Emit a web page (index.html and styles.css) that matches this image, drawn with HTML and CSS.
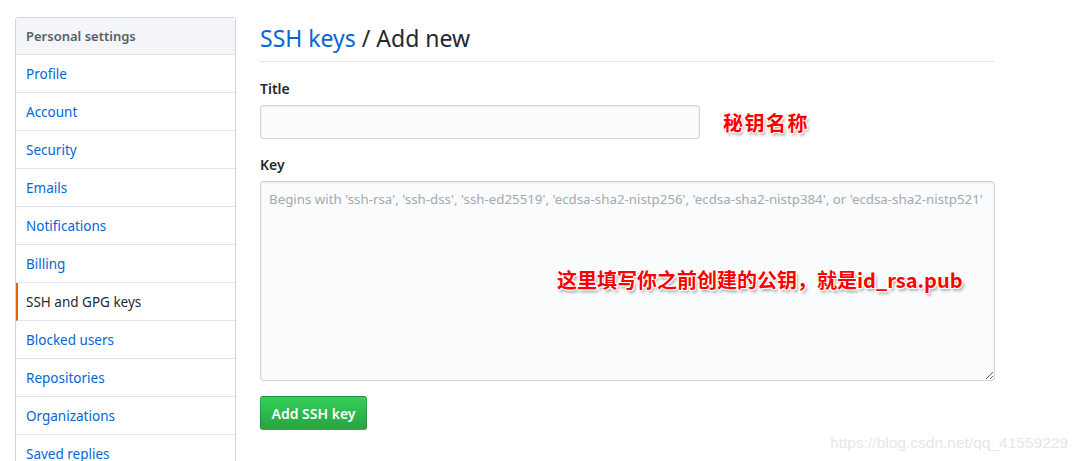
FILE: index.html
```html
<!DOCTYPE html>
<html lang="zh-CN">
<head>
  <meta charset="UTF-8">
  <title>SSH keys / Add new</title>
  <link rel="stylesheet" href="styles.css">
</head>
<body>
  <div class="pagina">
    <nav class="menu">
      <div class="menu-titulo">Personal settings</div>
      <a class="menu-item" href="#">Profile</a>
      <a class="menu-item" href="#">Account</a>
      <a class="menu-item" href="#">Security</a>
      <a class="menu-item" href="#">Emails</a>
      <a class="menu-item" href="#">Notifications</a>
      <a class="menu-item" href="#">Billing</a>
      <a class="menu-item activo" href="#">SSH and GPG keys</a>
      <a class="menu-item" href="#">Blocked users</a>
      <a class="menu-item" href="#">Repositories</a>
      <a class="menu-item" href="#">Organizations</a>
      <a class="menu-item" href="#">Saved replies</a>
    </nav>

    <main class="contenido">
      <h2 class="cabecera"><a href="#">SSH keys</a> / Add new</h2>

      <label class="etiqueta" for="titulo">Title</label>
      <div class="fila-titulo">
        <input type="text" id="titulo" class="campo">
        <span class="nota nota-titulo">秘钥名称</span>
      </div>

      <label class="etiqueta" for="clave">Key</label>
      <div class="caja-clave">
        <textarea id="clave" class="campo area" placeholder="Begins with 'ssh-rsa', 'ssh-dss', 'ssh-ed25519', 'ecdsa-sha2-nistp256', 'ecdsa-sha2-nistp384', or 'ecdsa-sha2-nistp521'"></textarea>
        <span class="nota nota-clave">这里填写你之前创建的公钥，就是id_rsa.pub</span>
      </div>

      <button class="boton">Add SSH key</button>
    </main>
  </div>
  <div class="marca">https://blog.csdn.net/qq_41559229</div>
</body>
</html>
```

FILE: styles.css
```css
* { box-sizing: border-box; margin: 0; padding: 0; }
body {
  font-family: "Noto Sans", "Liberation Sans", sans-serif;
  font-size: 14px;
  color: #24292e;
  background: #fff;
  height: 461px;
  overflow: hidden;
  position: relative;
}
a { text-decoration: none; color: #0366d6; }

.pagina {
  display: flex;
  align-items: flex-start;
  padding: 17px 0 0 15px;
  gap: 24px;
}

.menu {
  width: 221px;
  flex-shrink: 0;
  border: 1px solid #d1d5da;
  border-radius: 3px;
  display: flex;
  flex-direction: column;
}
.menu-titulo {
  height: 37px;
  line-height: 36px;
  padding-left: 10px;
  background: #f3f5f8;
  border-bottom: 1px solid #e1e4e8;
  color: #586069;
  font-size: 13px;
  font-weight: 600;
}
.menu-item {
  height: 38px;
  line-height: 38px;
  padding-left: 10px;
  border-bottom: 1px solid #e1e4e8;
  font-size: 13.5px;
}
.menu-item.activo {
  color: #24292e;
  border-left: 2px solid #e36209;
  padding-left: 8px;
}

.contenido {
  width: 735px;
  display: flex;
  flex-direction: column;
}
.cabecera {
  font-size: 23px;
  font-weight: 400;
  line-height: 40px;
  margin-top: 1px;
  padding-bottom: 3px;
  border-bottom: 1px solid #e1e4e8;
  margin-bottom: 16px;
}
.etiqueta {
  font-weight: 600;
  font-size: 14px;
  line-height: 21px;
  margin-bottom: 6px;
}
.fila-titulo {
  display: flex;
  align-items: center;
  gap: 23px;
  margin-bottom: 15px;
}
.campo {
  width: 440px;
  height: 34px;
  background: #fafbfc;
  border: 1px solid #d1d5da;
  border-radius: 3px;
  box-shadow: inset 0 1px 2px rgba(27,31,35,0.075);
  font-family: inherit;
  font-size: 14px;
  padding: 6px 8px;
}
.caja-clave {
  position: relative;
  margin-bottom: 15px;
}
.area {
  width: 735px;
  height: 200px;
  resize: vertical;
  display: block;
  padding: 7px 8px;
  line-height: 20px;
}
.area::placeholder { color: #a3aab1; font-size: 13.3px; }

.nota {
  color: #ff0000;
  font-family: "Noto Sans CJK SC", sans-serif;
  font-weight: 700;
  font-size: 20px;
  text-shadow: -1px -1px 0 #fff, 1px -1px 0 #fff, -1px 1px 0 #fff, 1px 1px 0 #fff, 2px 3px 3px rgba(0,0,0,0.35);
}
.nota-titulo { letter-spacing: 1.5px; }
.nota-clave {
  position: absolute;
  left: 297px;
  top: 84px;
}

.boton {
  align-self: flex-start;
  width: 107px;
  height: 34px;
  color: #fff;
  font-family: inherit;
  font-weight: 600;
  font-size: 14px;
  background: linear-gradient(-180deg, #34d058 0%, #28a745 90%);
  border: 1px solid rgba(27,31,35,0.2);
  border-radius: 3px;
}

.marca {
  position: absolute;
  right: 10px;
  bottom: 9px;
  font-family: "Liberation Sans", sans-serif;
  font-size: 15.5px;
  color: #e6e6e6;
}
```
